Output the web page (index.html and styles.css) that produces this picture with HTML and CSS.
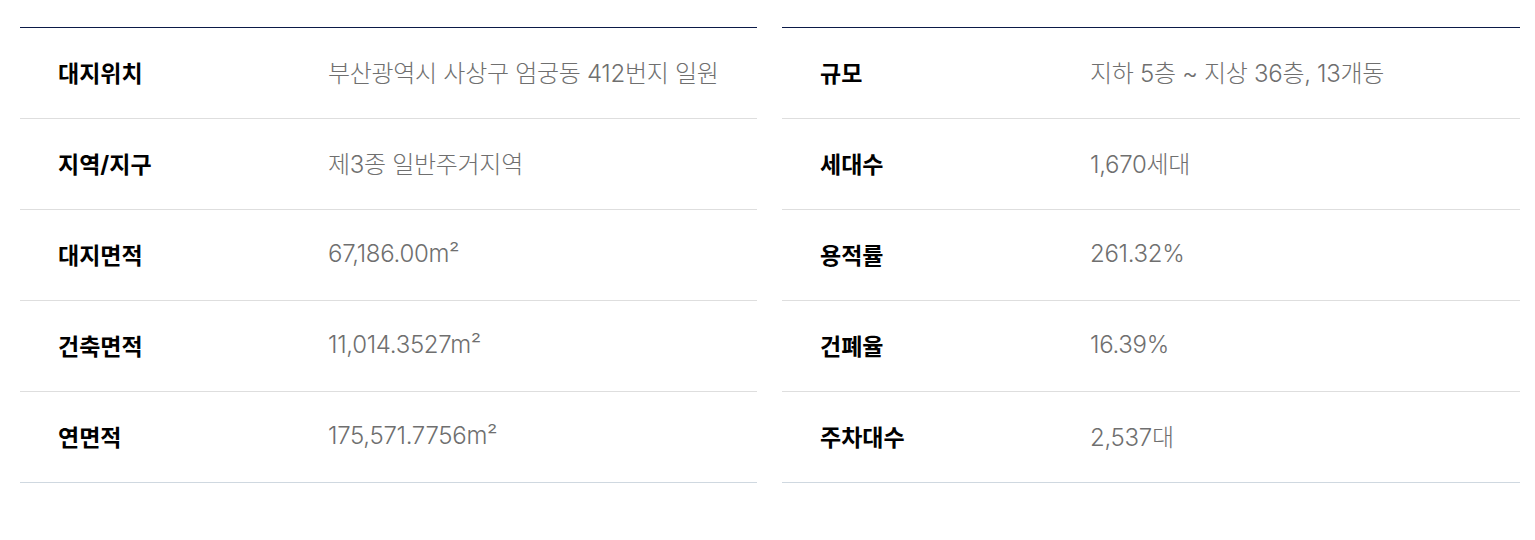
FILE: index.html
```html
<!DOCTYPE html>
<html lang="ko">
<head>
<meta charset="utf-8">
<link rel="stylesheet" href="styles.css">
</head>
<body>
<div class="wrap">
  <dl class="tbl">
    <div class="row"><dt>대지위치</dt><dd>부산광역시 사상구 엄궁동 412번지 일원</dd></div>
    <div class="row"><dt>지역/지구</dt><dd>제3종 일반주거지역</dd></div>
    <div class="row"><dt>대지면적</dt><dd>67,186.00m²</dd></div>
    <div class="row"><dt>건축면적</dt><dd>11,014.3527m²</dd></div>
    <div class="row"><dt>연면적</dt><dd>175,571.7756m²</dd></div>
  </dl>
  <dl class="tbl">
    <div class="row"><dt>규모</dt><dd>지하 5층 ~ 지상 36층, 13개동</dd></div>
    <div class="row"><dt>세대수</dt><dd>1,670세대</dd></div>
    <div class="row"><dt>용적률</dt><dd>261.32%</dd></div>
    <div class="row"><dt>건폐율</dt><dd>16.39%</dd></div>
    <div class="row"><dt>주차대수</dt><dd>2,537대</dd></div>
  </dl>
</div>
</body>
</html>
```

FILE: styles.css
```css
html, body {
  margin: 0;
  padding: 0;
  background: #fff;
}
body {
  font-family: Inter, "Noto Sans CJK KR", sans-serif;
}
.wrap {
  display: grid;
  grid-template-columns: 737px 738px;
  gap: 25px;
  margin: 27px 0 0 20px;
}
.tbl {
  margin: 0;
  border-top: 1px solid #0b1a48;
  border-bottom: 1px solid #cfd8e0;
}
.row {
  display: flex;
  align-items: center;
  box-sizing: border-box;
  height: 91px;
  padding-bottom: 3px;
  border-top: 1px solid #dedede;
}
.row:first-child {
  border-top: none;
  height: 90px;
}
.tbl dt {
  width: 270px;
  padding-left: 38px;
  font-size: 23px;
  font-weight: 700;
  color: #000;
}
.tbl dd {
  margin: 0;
  font-size: 24px;
  font-weight: 300;
  letter-spacing: -0.3px;
  color: #6f6f6f;
}
```
